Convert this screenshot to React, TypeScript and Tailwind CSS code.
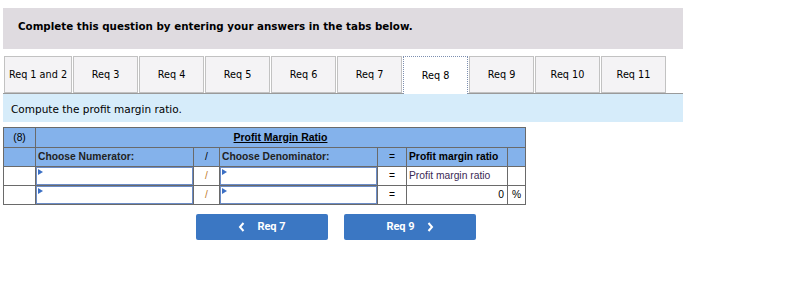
import React from "react";

const tabs = ["Req 1 and 2", "Req 3", "Req 4", "Req 5", "Req 6", "Req 7", "Req 8", "Req 9", "Req 10", "Req 11"];

function Marker() {
  return (
    <svg className="absolute left-[1px] top-[1px]" width="5" height="6" viewBox="0 0 5 6">
      <path d="M0 0 L5 3 L0 6 Z" fill="#3b6fc4" />
    </svg>
  );
}

function InputBox() {
  return (
    <div className="relative h-[18px] border border-[#6b8cc7] bg-white">
      <Marker />
    </div>
  );
}

const cell = "border border-[#6a6a6a]";

export default function App() {
  const font = { fontFamily: '"DejaVu Sans", Verdana, sans-serif' };
  return (
    <div className="w-[795px] h-[288px] bg-white text-[#111]" style={font}>
      <div className="pt-[8px] pl-[3px]">
        <div className="w-[680px] h-[41px] bg-[#dfdbe0] pt-[12px] pl-[15px]">
          <div className="text-[10.3px] leading-[12px] font-bold text-black">Complete this question by entering your answers in the tabs below.</div>
        </div>
        <div className="mt-[7px] w-[680px] flex gap-[1px] pl-[1px] border-b border-[#9a9a9a] h-[38px]">
          {tabs.map((t, i) => {
            const active = t === "Req 8";
            return (
              <div
                key={t}
                className={
                  (i === 0 ? "w-[68px] " : "w-[65px] ") +
                  (active
                    ? "bg-white border border-[#7d8fb0] border-dotted border-b-0 h-[38px] -mb-[1px] "
                    : "bg-[#f4f3f5] border border-[#c2c2c2] h-[37px] ") +
                  "flex items-center justify-center pt-[2px] text-[9.7px] text-black"
                }
              >
                {t}
              </div>
            );
          })}
        </div>
        <div className="w-[680px] h-[28px] bg-[#d6ecfa] flex items-center pl-[8px] pt-[3px] text-[10.5px] text-black">
          Compute the profit margin ratio.
        </div>
        <table className="mt-[5px] border-collapse text-[10.3px]" style={{ fontFamily: '"Liberation Sans", Arial, sans-serif' }}>
          <colgroup>
            <col className="w-[32px]" />
            <col className="w-[158px]" />
            <col className="w-[26px]" />
            <col className="w-[158px]" />
            <col className="w-[29px]" />
            <col className="w-[101px]" />
            <col className="w-[18px]" />
          </colgroup>
          <tbody>
            <tr className="h-[20px] bg-[#84b2eb]">
              <td className={cell + " text-center text-black"}>(8)</td>
              <td colSpan={6} className={cell + " text-center font-bold underline text-black text-[10.5px]"}>Profit Margin Ratio</td>
            </tr>
            <tr className="h-[19px] bg-[#84b2eb]">
              <td className={cell}></td>
              <td className={cell + " pl-[2px] font-bold text-[#222]"}>Choose Numerator:</td>
              <td className={cell + " text-center text-black"}>/</td>
              <td className={cell + " pl-[2px] font-bold text-[#222]"}>Choose Denominator:</td>
              <td className={cell + " text-center text-black"}>=</td>
              <td className={cell + " pl-[2px] font-bold text-black"}>Profit margin ratio</td>
              <td className={cell}></td>
            </tr>
            <tr className="h-[19px] bg-white">
              <td className={cell}></td>
              <td className={cell + " p-0"}><InputBox /></td>
              <td className={cell + " text-center text-[#c07a2a]"}>/</td>
              <td className={cell + " p-0"}><InputBox /></td>
              <td className={cell + " text-center text-black"}>=</td>
              <td className={cell + " pl-[2px] text-[#3a2a55]"}>Profit margin ratio</td>
              <td className={cell}></td>
            </tr>
            <tr className="h-[19px] bg-white">
              <td className={cell}></td>
              <td className={cell + " p-0"}><InputBox /></td>
              <td className={cell + " text-center text-[#c07a2a]"}>/</td>
              <td className={cell + " p-0"}><InputBox /></td>
              <td className={cell + " text-center text-black"}>=</td>
              <td className={cell + " pr-[3px] text-right text-black"}>0</td>
              <td className={cell + " text-center text-black"}>%</td>
            </tr>
          </tbody>
        </table>
        <div className="mt-[9px] flex gap-[16px] pl-[193px]">
          <button className="w-[132px] h-[26px] bg-[#3b77c3] rounded-[2px] flex items-center justify-center gap-[12px] text-white font-bold text-[11px]" style={{ fontFamily: 'Roboto, "Liberation Sans", sans-serif' }}>
            <svg width="7" height="10" viewBox="0 0 7 10"><path d="M5.5 1 L2 5 L5.5 9" stroke="white" strokeWidth="2" fill="none" /></svg>
            <span>Req 7</span>
          </button>
          <button className="w-[132px] h-[26px] bg-[#3b77c3] rounded-[2px] flex items-center justify-center gap-[12px] text-white font-bold text-[11px]" style={{ fontFamily: 'Roboto, "Liberation Sans", sans-serif' }}>
            <span>Req 9</span>
            <svg width="7" height="10" viewBox="0 0 7 10"><path d="M1.5 1 L5 5 L1.5 9" stroke="white" strokeWidth="2" fill="none" /></svg>
          </button>
        </div>
      </div>
    </div>
  );
}
